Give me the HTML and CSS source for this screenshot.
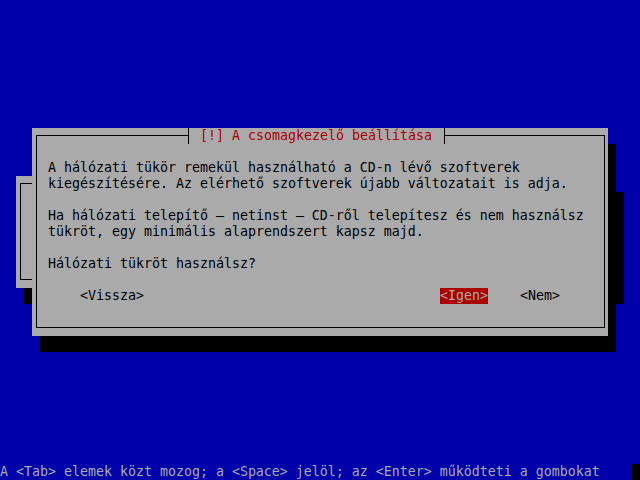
FILE: index.html
```html
<!DOCTYPE html>
<html lang="hu">

<head>
    <meta charset="utf-8">
    <meta name="viewport" content="width=device-width, initial-scale=1.0">
    <title>Debian telepítő</title>

    <link rel="stylesheet" href="styles.css">
</head>

<body>

    <main class="screen">
        <!-- a háttérben lévő ablak -->
        <div class="shadow back-shadow"></div>
        <section class="dialog back-dialog">
            <div class="frame"></div>
        </section>

        <!-- az aktív ablak -->
        <div class="shadow main-shadow"></div>
        <section class="dialog main-dialog">
            <div class="frame"></div>
            <h1 class="title"><span class="tee tee-left"></span> [!] A csomagkezelő beállítása <span class="tee tee-right"></span></h1>
            <p class="msg msg-1">A hálózati tükör remekül használható a CD-n lévő szoftverek
kiegészítésére. Az elérhető szoftverek újabb változatait is adja.</p>
            <p class="msg msg-2">Ha hálózati telepítő – netinst – CD-ről telepítesz és nem használsz
tükröt, egy minimális alaprendszert kapsz majd.</p>
            <p class="msg msg-3">Hálózati tükröt használsz?</p>
            <span class="btn btn-back">&lt;Vissza&gt;</span>
            <span class="btn btn-yes valgt">&lt;Igen&gt;</span>
            <span class="btn btn-no">&lt;Nem&gt;</span>
        </section>

        <footer class="help">A &lt;Tab&gt; elemek közt mozog; a &lt;Space&gt; jelöl; az &lt;Enter&gt; működteti a gombokat</footer>
        <div class="cursor"></div>
    </main>

</body></html>
```

FILE: styles.css
```css
html,
body {
    margin: 0;
    background: #0000aa;
}

.screen {
    display: grid;
    grid-template-columns: repeat(80, 8px);
    grid-template-rows: repeat(30, 16px);
    width: 640px;
    height: 480px;
    font-family: "DejaVu Sans Mono", monospace;
    font-size: 13.29px;
    line-height: 16px;
    color: #000;
}

.shadow {
    background: #000;
}

.back-shadow {
    grid-column: 4 / 79;
    grid-row: 13 / 20;
}

.back-dialog {
    grid-column: 3 / 78;
    grid-row: 12 / 19;
}

.main-shadow {
    grid-column: 6 / 78;
    grid-row: 10 / 23;
}

.main-dialog {
    grid-column: 5 / 77;
    grid-row: 9 / 22;
}

.dialog {
    display: grid;
    grid-template-columns: repeat(72, 8px);
    grid-template-rows: repeat(13, 16px);
    background: #aaaaaa;
}

.back-dialog {
    grid-template-columns: repeat(75, 8px);
    grid-template-rows: repeat(7, 16px);
}

/* keret a cellák közepén, mint a vonalrajzoló karakterek */
.frame {
    grid-column: 1 / -1;
    grid-row: 1 / -1;
    margin: 7px 3px 8px 4px;
    border: 1px solid #000;
}

.title {
    grid-column: 20 / 53;
    grid-row: 1;
    display: flex;
    margin: 0;
    font-size: inherit;
    font-weight: normal;
    white-space: pre;
    color: #aa0000;
    background: #aaaaaa;
}

.tee {
    width: 8px;
    height: 16px;
}

.tee-left {
    background:
        linear-gradient(#000, #000) 4px 0 / 1px 100% no-repeat,
        linear-gradient(#000, #000) 0 7px / 4px 1px no-repeat;
}

.tee-right {
    background:
        linear-gradient(#000, #000) 4px 0 / 1px 100% no-repeat,
        linear-gradient(#000, #000) 4px 7px / 4px 1px no-repeat;
}

.msg {
    grid-column: 3 / -1;
    margin: 0;
    white-space: pre;
}

.msg-1 {
    grid-row: 3 / span 2;
}

.msg-2 {
    grid-row: 6 / span 2;
}

.msg-3 {
    grid-row: 9;
}

.btn {
    grid-row: 11;
    white-space: pre;
}

.btn-back {
    grid-column: 7 / span 8;
}

.btn-yes {
    grid-column: 52 / span 6;
}

.btn-no {
    grid-column: 62 / span 5;
}

.valgt {
    background: #aa0000;
    color: #aaaaaa;
}

.help {
    grid-column: 1 / 80;
    grid-row: 30;
    white-space: pre;
    color: #aaaaaa;
}

.cursor {
    grid-column: 80;
    grid-row: 30;
    background: #000;
}
```
